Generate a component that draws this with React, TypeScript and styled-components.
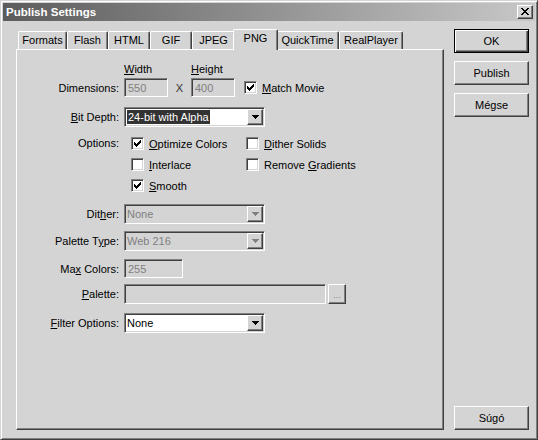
import React from 'react';
import styled, { createGlobalStyle, css } from 'styled-components';

const FACE = '#d4d4d4';
const SHADOW = '#808080';
const DARK = '#404040';
const FONT = `"Liberation Sans", Arial, sans-serif`;

const GlobalStyle = createGlobalStyle`
  html, body {
    margin: 0;
    padding: 0;
    background: ${FACE};
  }
  body {
    font-family: ${FONT};
    font-size: 11px;
    color: #000;
  }
  * { box-sizing: border-box; }
`;

const sunken = css`
  border: 1px solid;
  border-color: ${SHADOW} #fff #fff ${SHADOW};
  box-shadow: inset 1px 1px ${DARK}, inset -1px -1px ${FACE};
`;

const raised = css`
  border: 1px solid;
  border-color: #fff ${DARK} ${DARK} #fff;
  box-shadow: inset -1px -1px ${SHADOW};
`;

const Window = styled.div`
  width: 538px;
  height: 440px;
  display: flex;
  flex-direction: column;
  padding: 2px;
  border: 1px solid;
  border-color: ${FACE} ${DARK} ${DARK} ${FACE};
  box-shadow: inset 1px 1px #fff, inset -1px -1px ${SHADOW};
  background: ${FACE};
`;

const TitleBar = styled.div`
  height: 18px;
  display: flex;
  align-items: center;
  justify-content: space-between;
  padding: 0 2px 0 3px;
  background: linear-gradient(to right, #5c5c5c, #c8c8c8);
  color: #fff;
  font-weight: bold;
  font-size: 11.5px;
`;

const CloseButton = styled.div`
  ${raised};
  width: 16px;
  height: 14px;
  background: ${FACE};
  display: flex;
  align-items: center;
  justify-content: center;
  padding-bottom: 1px;
`;

const Body = styled.div`
  flex: 1;
  display: flex;
  gap: 10px;
  padding: 8px 6px 7px 13px;
`;

const LeftColumn = styled.div`
  width: 428px;
  display: flex;
  flex-direction: column;
`;

const TabStrip = styled.div`
  height: 20px;
  display: flex;
  align-items: flex-end;
  padding-left: 2px;
`;

const Tab = styled.div<{ $w: number; $active?: boolean }>`
  width: ${p => p.$w}px;
  height: 18px;
  flex-shrink: 0;
  border-top: 1px solid #fff;
  border-left: 1px solid #fff;
  border-right: 1px solid ${DARK};
  border-radius: 2px 2px 0 0;
  box-shadow: inset -1px 0 ${SHADOW};
  background: ${FACE};
  text-align: center;
  padding-top: 2px;
  white-space: nowrap;
  ${p => p.$active && css`
    width: ${p.$w + 4}px;
    height: 21px;
    margin: 0 -2px -1px;
    position: relative;
    z-index: 1;
    padding-top: 2px;
  `}
`;

const Panel = styled.div`
  flex: 1;
  border: 1px solid;
  border-color: #fff ${DARK} ${DARK} #fff;
  box-shadow: inset -1px -1px ${SHADOW};
  display: flex;
  flex-direction: column;
`;

const Row = styled.div<{ $mt: number; $top?: boolean }>`
  display: flex;
  align-items: ${p => (p.$top ? 'flex-start' : 'center')};
  margin-top: ${p => p.$mt}px;
`;

const Label = styled.div<{ $lh?: number }>`
  width: 104px;
  flex-shrink: 0;
  padding-right: 2px;
  margin-right: 3px;
  text-align: right;
  white-space: nowrap;
  line-height: ${p => p.$lh ?? 14}px;
`;

const HeadLabel = styled.div<{ $w?: number }>`
  width: ${p => (p.$w ? `${p.$w}px` : 'auto')};
  line-height: 13px;
`;

const U = styled.span`
  text-decoration: underline;
`;

const Field = styled.div<{ $w: number; $h?: number; $disabled?: boolean }>`
  ${sunken};
  width: ${p => p.$w}px;
  height: ${p => p.$h ?? 19}px;
  flex-shrink: 0;
  background: ${p => (p.$disabled ? FACE : '#fff')};
  color: ${p => (p.$disabled ? SHADOW : '#000')};
  padding: 0 3px;
  display: flex;
  align-items: center;
`;

const Times = styled.div`
  width: 23px;
  text-align: center;
  color: #333;
`;

const ComboBox = styled.div<{ $disabled?: boolean }>`
  ${sunken};
  width: 141px;
  height: 20px;
  padding: 1px;
  display: flex;
  background: ${p => (p.$disabled ? FACE : '#fff')};
  color: ${p => (p.$disabled ? SHADOW : '#000')};
`;

const ComboText = styled.div`
  flex: 1;
  display: flex;
  align-items: center;
  padding-left: 1px;
  white-space: nowrap;
  overflow: hidden;
`;

const Selected = styled.span`
  background: #333;
  color: #fff;
  padding: 0 1px;
  line-height: 14px;
`;

const DropButton = styled.div`
  ${raised};
  width: 16px;
  height: 16px;
  background: ${FACE};
  display: flex;
  align-items: center;
  justify-content: center;
`;

const SmallButton = styled.div`
  ${raised};
  width: 18px;
  height: 20px;
  margin-left: 2px;
  background: ${FACE};
  color: ${SHADOW};
  font-size: 9px;
  display: flex;
  align-items: flex-end;
  justify-content: center;
  padding-bottom: 3px;
`;

const OptionsGrid = styled.div`
  display: grid;
  grid-template-columns: 115px auto;
  grid-auto-rows: 21px;
  padding-left: 7px;
`;

const CheckItem = styled.label<{ $ml?: number }>`
  display: flex;
  align-items: center;
  gap: 5px;
  margin-left: ${p => p.$ml ?? 0}px;
  white-space: nowrap;
`;

const Box = styled.span`
  ${sunken};
  width: 13px;
  height: 13px;
  flex-shrink: 0;
  background: #fff;
  display: flex;
  align-items: center;
  justify-content: center;
`;

const RightColumn = styled.div`
  width: 75px;
  display: flex;
  flex-direction: column;
  gap: 8px;
`;

const Button = styled.div<{ $default?: boolean; $bottom?: boolean }>`
  width: 75px;
  height: 24px;
  background: ${FACE};
  display: flex;
  align-items: center;
  justify-content: center;
  margin-top: ${p => (p.$bottom ? 'auto' : '0')};
  ${p =>
    p.$default
      ? css`
          border: 1px solid #000;
          box-shadow: inset 1px 1px #fff, inset -1px -1px ${DARK}, inset -2px -2px ${SHADOW};
        `
      : raised}
`;

const CloseGlyph = () => (
  <svg width="8" height="7" viewBox="0 0 8 7">
    {[0, 1, 2, 3, 4, 5, 6].map(r => {
      const d = Math.min(r, 6 - r);
      return (
        <g key={r}>
          <rect x={d} y={r} width={2} height={1} fill="#000" />
          <rect x={6 - d} y={r} width={2} height={1} fill="#000" />
        </g>
      );
    })}
  </svg>
);

const CHECK_ROWS: [number, number][][] = [
  [[6, 1]],
  [[5, 2]],
  [[0, 1], [4, 3]],
  [[0, 2], [3, 3]],
  [[0, 5]],
  [[1, 3]],
  [[2, 1]],
];

const CheckGlyph = () => (
  <svg width="7" height="7" viewBox="0 0 7 7">
    {CHECK_ROWS.map((segs, r) =>
      segs.map(([x, w]) => <rect key={`${r}-${x}`} x={x} y={r} width={w} height={1} fill="#000" />)
    )}
  </svg>
);

const ArrowGlyph = ({ color }: { color: string }) => (
  <svg width="7" height="4" viewBox="0 0 7 4">
    {[0, 1, 2, 3].map(r => (
      <rect key={r} x={r} y={r} width={7 - r * 2} height={1} fill={color} />
    ))}
  </svg>
);

const Check: React.FC<{ checked?: boolean; ml?: number; children: React.ReactNode }> = ({ checked, ml, children }) => (
  <CheckItem $ml={ml}>
    <Box>{checked && <CheckGlyph />}</Box>
    <span>{children}</span>
  </CheckItem>
);

const Combo: React.FC<{ disabled?: boolean; children: React.ReactNode }> = ({ disabled, children }) => (
  <ComboBox $disabled={disabled}>
    <ComboText>{children}</ComboText>
    <DropButton>
      <ArrowGlyph color={disabled ? SHADOW : '#000'} />
    </DropButton>
  </ComboBox>
);

const TABS = [
  { name: 'Formats', w: 49 },
  { name: 'Flash', w: 41 },
  { name: 'HTML', w: 42 },
  { name: 'GIF', w: 42 },
  { name: 'JPEG', w: 43 },
  { name: 'PNG', w: 41 },
  { name: 'QuickTime', w: 63 },
  { name: 'RealPlayer', w: 64 },
];

export default function App() {
  const active = 'PNG';
  return (
    <>
      <GlobalStyle />
      <Window>
        <TitleBar>
          <span>Publish Settings</span>
          <CloseButton>
            <CloseGlyph />
          </CloseButton>
        </TitleBar>
        <Body>
          <LeftColumn>
            <TabStrip>
              {TABS.map(t => (
                <Tab key={t.name} $w={t.w} $active={t.name === active}>
                  {t.name}
                </Tab>
              ))}
            </TabStrip>
            <Panel>
              <Row $mt={13}>
                <Label />
                <HeadLabel $w={67}>
                  <U>W</U>idth
                </HeadLabel>
                <HeadLabel>
                  <U>H</U>eight
                </HeadLabel>
              </Row>
              <Row $mt={2}>
                <Label>Dimensions:</Label>
                <Field $w={44} $disabled>550</Field>
                <Times>X</Times>
                <Field $w={44} $disabled>400</Field>
                <Check checked ml={9}>
                  <U>M</U>atch Movie
                </Check>
              </Row>
              <Row $mt={10}>
                <Label>
                  <U>B</U>it Depth:
                </Label>
                <Combo>
                  <Selected>24-bit with Alpha</Selected>
                </Combo>
              </Row>
              <Row $mt={6} $top>
                <Label $lh={21}>Options:</Label>
                <OptionsGrid>
                  <Check checked>
                    <U>O</U>ptimize Colors
                  </Check>
                  <Check>
                    <U>D</U>ither Solids
                  </Check>
                  <Check>
                    <U>I</U>nterlace
                  </Check>
                  <Check>
                    Remove <U>G</U>radients
                  </Check>
                  <Check checked>
                    <U>S</U>mooth
                  </Check>
                </OptionsGrid>
              </Row>
              <Row $mt={8}>
                <Label>
                  Dit<U>h</U>er:
                </Label>
                <Combo disabled>None</Combo>
              </Row>
              <Row $mt={7}>
                <Label>
                  Palette T<U>y</U>pe:
                </Label>
                <Combo disabled>Web 216</Combo>
              </Row>
              <Row $mt={8}>
                <Label>
                  Ma<U>x</U> Colors:
                </Label>
                <Field $w={59} $disabled>255</Field>
              </Row>
              <Row $mt={6}>
                <Label>
                  <U>P</U>alette:
                </Label>
                <Field $w={202} $h={20} $disabled />
                <SmallButton>...</SmallButton>
              </Row>
              <Row $mt={9}>
                <Label>
                  <U>F</U>ilter Options:
                </Label>
                <Combo>None</Combo>
              </Row>
            </Panel>
          </LeftColumn>
          <RightColumn>
            <Button $default>OK</Button>
            <Button>Publish</Button>
            <Button>Mégse</Button>
            <Button $bottom>Súgó</Button>
          </RightColumn>
        </Body>
      </Window>
    </>
  );
}
